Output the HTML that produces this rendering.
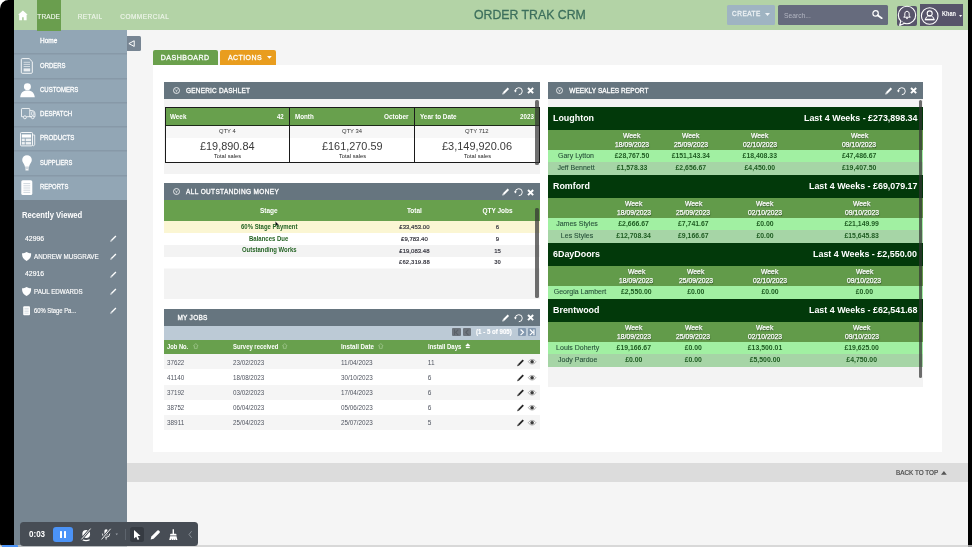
<!DOCTYPE html>
<html lang="en">
<head>
<meta charset="utf-8">
<title>ORDER TRAK CRM</title>
<style>
*{box-sizing:border-box;margin:0;padding:0}
html,body{width:972px;height:547px;overflow:hidden;background:#fff}
body{position:relative;font-family:"Liberation Sans",sans-serif;color:#fff}
.b{position:absolute}
.t{position:absolute;white-space:nowrap;line-height:1;display:block;transform-origin:0 50%}
svg{position:absolute;overflow:visible}
.sep{position:absolute;left:14px;width:112.7px;height:1px;background:#8799a8;box-shadow:0 1px 0 #8d9fae}
.dh{position:absolute;height:17px;background:#66757f}
.db{position:absolute;background:#f3f3f3}
.gh{position:absolute;background:#68a04d}
.wt{position:absolute;left:547.6px;width:375.2px;background:#02390a}
.ww{position:absolute;left:547.6px;width:375.2px;height:20px;background:#629b4a}
.w1{position:absolute;left:547.6px;width:375.2px;height:12px;background:#a1f0a2}
.w2{position:absolute;left:547.6px;width:375.2px;height:12px;background:#a6d5a6}
.sb{position:absolute;width:3.3px;border-radius:1.6px;background:rgba(50,50,50,.7)}
</style>
</head>
<body>
<!-- frame -->
<div class="b" style="left:14px;top:29.5px;width:954px;height:517.5px;background:#f5f5f5"></div>
<div class="b" style="left:0;top:0;width:14.3px;height:547px;background:#000;border-radius:8.500px 0 0 4px"></div>
<div class="b" style="left:967.6px;top:0;width:4.4px;height:547px;background:#000"></div>

<!-- top bar -->
<div class="b" style="left:14px;top:0;width:953.8px;height:29.5px;background:#b3d3a6"></div>
<div class="b" style="left:36.7px;top:0;width:24.2px;height:31px;background:#6a9e4e;z-index:2"></div>
<svg style="left:17.800px;top:10px" width="9.800" height="10.600" viewBox="0 0 10 10.4"><path d="M5 0.200L0.100 4.700H1.200V10.200H4.100V7.300H5.900V10.200H8.800V4.700H9.900Z" fill="#fff"/></svg>
<div class="b" style="left:727px;top:5px;width:48.2px;height:19.500px;background:#9fb4c2;border-radius:1.5px"></div>
<svg style="left:765.4px;top:12.8px" width="5" height="3" viewBox="0 0 5 3"><path d="M0 0H5L2.5 3Z" fill="#edf2f5"/></svg>
<div class="b" style="left:778px;top:5px;width:110px;height:19.500px;background:#666b7d;border-radius:1.5px"></div>
<svg style="left:871.5px;top:10px" width="10.6" height="9" viewBox="0 0 10.6 9"><circle cx="3.6" cy="3.4" r="2.7" fill="none" stroke="#fff" stroke-width="1.2"/><path d="M5.6 5.2L9.8 8.2" stroke="#fff" stroke-width="1.7" stroke-linecap="round"/></svg>
<!-- bell -->
<div class="b" style="left:897.2px;top:6.2px;width:19.5px;height:19.4px;background:#57546a;border-radius:2px"></div>
<svg style="left:897px;top:5px" width="20" height="22" viewBox="0 0 20 22"><circle cx="10" cy="10" r="8.700" fill="none" stroke="#fff" stroke-width="1.100"/><path d="M3.800 16L2.700 20.400L7.600 18.300" fill="#57546a" stroke="#fff" stroke-width="1.100" stroke-linejoin="round"/><path d="M10 6.300c-1.500 0-2.200 1.200-2.200 2.600v2l-1.100 1.300h6.600l-1.100-1.300v-2c0-1.400-.7-2.600-2.200-2.600z" fill="none" stroke="#fff" stroke-width="1" stroke-linejoin="round"/><path d="M9.200 12.600h1.600v.9a.8.800 0 0 1-1.600 0z" fill="#fff"/></svg>
<!-- user -->
<div class="b" style="left:920.2px;top:4px;width:42.600px;height:21.700px;background:#57546a"></div>
<svg style="left:920.2px;top:4px" width="20" height="22" viewBox="0 0 20 22"><circle cx="9.700" cy="12" r="8.300" fill="none" stroke="#fff" stroke-width="1.100"/><circle cx="9.700" cy="9.400" r="2.500" fill="none" stroke="#fff" stroke-width="1.100"/><path d="M5.400 15.600c.5-2.300 1.600-3.400 2.700-3.700h3.200c1.100.3 2.200 1.400 2.700 3.700z" fill="none" stroke="#fff" stroke-width="1"/><rect x="4.800" y="14.800" width="9.800" height="1.500" fill="#fff"/></svg>
<svg style="left:959.3px;top:14.600px" width="3.2" height="2" viewBox="0 0 3.2 2"><path d="M0 0H3.2L1.600 2Z" fill="#fff"/></svg>

<!-- sidebar -->
<div class="b" style="left:14px;top:29.5px;width:112.7px;height:171px;background:#92a6b5"></div>
<div class="b" style="left:14px;top:200px;width:112.7px;height:347px;background:#768591"></div>
<div class="sep" style="top:53px"></div><div class="sep" style="top:78px"></div><div class="sep" style="top:102px"></div><div class="sep" style="top:126px"></div><div class="sep" style="top:150px"></div><div class="sep" style="top:175px"></div>
<!-- toggle -->
<div class="b" style="left:126.7px;top:35.8px;width:14.3px;height:14.8px;background:#778593;border-radius:0 1.5px 1.5px 0"></div>
<svg style="left:128.300px;top:40.300px" width="7" height="7.200" viewBox="0 0 6.4 6.600"><path d="M5.700 0.700V5.900L0.800 3.300Z" fill="none" stroke="#fff" stroke-width="0.9" stroke-linejoin="round"/></svg>
<!-- sidebar icons -->
<svg style="left:21px;top:58px" width="12" height="16" viewBox="0 0 12 16"><path d="M1.300 0.600H8.200L11.300 3.700V14.300a1 1 0 0 1-1 1H1.300a1 1 0 0 1-1-1V1.600a1 1 0 0 1 1-1z" fill="none" stroke="#fff" stroke-width="0.9"/><path d="M2.600 4.300H9M2.600 6.400H9M2.600 8.500H9" stroke="#fff" stroke-width="0.700" opacity=".85"/><rect x="2.600" y="10.400" width="6.600" height="3" fill="#fff" opacity=".8"/></svg>
<svg style="left:19.8px;top:83px" width="15" height="14.2" viewBox="0 0 15 14.200"><circle cx="7.400" cy="3.700" r="3.500" fill="#fff"/><path d="M0.200 14.200C0.600 10.200 2.600 7.600 7.400 7.600S14.200 10.200 14.800 14.200Z" fill="#fff"/></svg>
<svg style="left:21px;top:107.800px" width="14.600" height="11.400" viewBox="0 0 14.600 11.400"><path d="M0.500 8.700V1.200a.7.700 0 0 1 .7-.7H8.100a.7.700 0 0 1 .7.700V8.700" fill="none" stroke="#fff" stroke-width="0.800"/><path d="M8.800 2.600H11.700c1.300 0 2.300 1.600 2.300 3.400V8.700H8.800" fill="none" stroke="#fff" stroke-width="0.800"/><rect x="10.600" y="3.800" width="2.300" height="3.400" rx=".6" fill="none" stroke="#fff" stroke-width="0.700"/><circle cx="3.900" cy="9.300" r="1.500" fill="#92a6b5" stroke="#fff" stroke-width="0.800"/><circle cx="11.700" cy="9.300" r="1.400" fill="#92a6b5" stroke="#fff" stroke-width="0.800"/><path d="M0.500 8.700H2.400M5.400 8.700H10.200" stroke="#fff" stroke-width="0.800"/></svg>
<svg style="left:19.800px;top:131.800px" width="15.200" height="14.400" viewBox="0 0 15.200 14.400"><rect x="0.500" y="0.500" width="12" height="13.400" rx="1" fill="none" stroke="#fff" stroke-width="0.900"/><path d="M12.500 3H14.700V12.400a1.300 1.300 0 0 1-2.200 1" fill="none" stroke="#fff" stroke-width="0.800"/><rect x="1.800" y="2.400" width="9.300" height="3.200" fill="#fff"/><rect x="1.800" y="6.600" width="3" height="2.600" fill="#fff" opacity=".85"/><rect x="5.700" y="6.600" width="5.400" height="2.600" fill="#fff" opacity=".85"/><rect x="1.800" y="10.100" width="3" height="2.400" fill="#fff" opacity=".85"/><rect x="5.700" y="10.100" width="5.400" height="2.400" fill="#fff" opacity=".85"/></svg>
<svg style="left:22.200px;top:155px" width="10" height="16.200" viewBox="0 0 10 16.200"><path d="M5 0.200a4.800 4.800 0 0 0-4.800 4.800c0 2.300 1.700 3.400 2.300 5.200l.4 1.600h4.200l.4-1.600c.6-1.800 2.300-2.900 2.300-5.200A4.800 4.800 0 0 0 5 0.200z" fill="#fff"/><rect x="3.100" y="12.400" width="3.800" height="1.200" fill="#fff" opacity=".9"/><rect x="3.400" y="14.100" width="3.200" height="1.300" rx=".5" fill="#fff" opacity=".9"/></svg>
<svg style="left:21.400px;top:179.800px" width="11.600" height="15.400" viewBox="0 0 11.600 15.400"><rect x="0.300" y="0.300" width="11" height="14.800" rx="1.500" fill="#fff"/><path d="M2.400 3.600H9.200M2.400 5.800H9.200M2.400 8H9.200M2.400 10.200H9.200M2.400 12.400H9.200" stroke="#c9d2da" stroke-width="0.900"/></svg>
<!-- recents icons -->
<svg style="left:21.500px;top:252px" width="9.200" height="9" viewBox="0 0 9.200 9"><path d="M4.600 0.100C3.200 1 1.700 1.300 0.100 1.300c-.2 3.400.9 6.100 4.500 7.600 3.600-1.500 4.700-4.200 4.500-7.600-1.600 0-3.100-.3-4.500-1.200z" fill="#fff"/></svg>
<svg style="left:21.500px;top:287.300px" width="9.200" height="9" viewBox="0 0 9.200 9"><path d="M4.600 0.100C3.200 1 1.700 1.300 0.100 1.300c-.2 3.400.9 6.100 4.500 7.600 3.600-1.500 4.700-4.200 4.500-7.600-1.600 0-3.100-.3-4.500-1.200z" fill="#fff"/></svg>
<svg style="left:22.600px;top:305.700px" width="7.200" height="9.400" viewBox="0 0 7.200 9.400"><rect x="0.200" y="0.200" width="6.800" height="9" rx="1" fill="#fff"/><path d="M1.500 2.400H5.700M1.500 4H5.700M1.500 5.600H5.700M1.500 7.200H5.700" stroke="#c3ccd3" stroke-width="0.600"/></svg>
<svg style="left:110.400px;top:235px" width="7" height="7" viewBox="0 0 7 7"><path d="M1.400 5.600L5.900 1.100" stroke="#fff" stroke-width="1.350" fill="none"/><path d="M0.300 6.700L0.800 5.050L1.950 6.200Z" fill="#fff"/></svg>
<svg style="left:110.400px;top:253px" width="7" height="7" viewBox="0 0 7 7"><path d="M1.400 5.600L5.900 1.100" stroke="#fff" stroke-width="1.350" fill="none"/><path d="M0.300 6.700L0.800 5.050L1.950 6.200Z" fill="#fff"/></svg>
<svg style="left:110.400px;top:270.500px" width="7" height="7" viewBox="0 0 7 7"><path d="M1.400 5.600L5.900 1.100" stroke="#fff" stroke-width="1.350" fill="none"/><path d="M0.300 6.700L0.800 5.050L1.950 6.200Z" fill="#fff"/></svg>
<svg style="left:110.400px;top:288.300px" width="7" height="7" viewBox="0 0 7 7"><path d="M1.400 5.600L5.900 1.100" stroke="#fff" stroke-width="1.350" fill="none"/><path d="M0.300 6.700L0.800 5.050L1.950 6.200Z" fill="#fff"/></svg>
<svg style="left:110.400px;top:307px" width="7" height="7" viewBox="0 0 7 7"><path d="M1.400 5.600L5.900 1.100" stroke="#fff" stroke-width="1.350" fill="none"/><path d="M0.300 6.700L0.800 5.050L1.950 6.200Z" fill="#fff"/></svg>

<!-- tabs + panel -->
<div class="b" style="left:153px;top:49.900px;width:64.900px;height:15.500px;background:#6aa04c;border-radius:2px 2px 0 0"></div>
<div class="b" style="left:219.900px;top:49.900px;width:55.900px;height:15.300px;background:#e99d1e;border-radius:2px 2px 0 0"></div>
<svg style="left:267px;top:56.400px" width="4.800" height="2.800" viewBox="0 0 4.800 2.800"><path d="M0 0H4.800L2.400 2.800Z" fill="#fff"/></svg>
<div class="b" style="left:153px;top:65.200px;width:788.600px;height:387.200px;background:#fff"></div>
<div class="b" style="left:126.700px;top:463px;width:841px;height:19px;background:#dcdcdc"></div>
<svg style="left:941px;top:471px" width="5.800" height="3.800" viewBox="0 0 5.800 3.800"><path d="M0 3.800H5.800L2.900 0Z" fill="#555"/></svg>

<!-- dashlet 1: generic -->
<div class="db" style="left:164.200px;top:98px;width:375.500px;height:75.700px"></div>
<div class="dh" style="left:164.200px;top:81.800px;width:375.500px"></div>
<div class="b" style="left:165px;top:107px;width:375px;height:56px;background:#fff;border:1px solid #1a1a1a"></div>
<div class="b" style="left:166px;top:126px;width:373px;height:12px;background:#f7f7f7"></div>
<div class="gh" style="left:166px;top:108px;width:373px;height:17px"></div>
<div class="b" style="left:166px;top:125px;width:373px;height:1px;background:#1d2b18"></div>
<div class="b" style="left:289px;top:107px;width:1px;height:56px;background:#1a1a1a"></div>
<div class="b" style="left:414px;top:107px;width:1px;height:56px;background:#1a1a1a"></div>
<div class="sb" style="left:535.300px;top:100px;height:65px;width:3.400px"></div>

<!-- dashlet 2: outstanding -->
<div class="db" style="left:164.200px;top:200px;width:375.500px;height:99px"></div>
<div class="dh" style="left:164.200px;top:183.200px;width:375.500px"></div>
<div class="gh" style="left:164.200px;top:200px;width:375.500px;height:21px"></div>
<div class="b" style="left:164.200px;top:221px;width:375.500px;height:12px;background:#fbf6d3"></div>
<div class="b" style="left:164.200px;top:233px;width:375.500px;height:12px;background:#fff"></div>
<div class="b" style="left:164.200px;top:245px;width:375.500px;height:12px;background:#f3f3f3"></div>
<div class="b" style="left:164.200px;top:257px;width:375.500px;height:11px;background:#fff"></div>
<div class="b" style="left:164.200px;top:268px;width:375.500px;height:1px;background:#f9f9f9"></div>
<div class="sb" style="left:535.300px;top:208.300px;height:89.500px;width:3.400px"></div>
<svg style="left:275.300px;top:220.900px" width="4.600" height="6.600" viewBox="0 0 4.600 6.600"><path d="M0.300 0.200V5.300L1.500 4.300L2.400 6.200L3.300 5.800L2.400 3.900H4.100Z" fill="#0a0a0a" stroke="#fff" stroke-width="0.350" stroke-linejoin="round"/></svg>

<!-- dashlet 3: my jobs -->
<div class="dh" style="left:164.200px;top:308.900px;width:375.500px;height:16.800px"></div>
<div class="b" style="left:164.200px;top:325.600px;width:375.500px;height:14.700px;background:#bccad6"></div>
<div class="gh" style="left:164.200px;top:340.200px;width:375.500px;height:14.200px"></div>
<div class="b" style="left:164.200px;top:354.400px;width:375.500px;height:15.100px;background:#f5f5f5"></div>
<div class="b" style="left:164.200px;top:384.600px;width:375.500px;height:15.100px;background:#f5f5f5"></div>
<div class="b" style="left:164.200px;top:414.800px;width:375.500px;height:15.100px;background:#f5f5f5"></div>
<!-- pagination -->
<div class="b" style="left:452px;top:327.700px;width:8.600px;height:8.700px;background:#6d747c;border-radius:1px"></div>
<div class="b" style="left:462.700px;top:327.700px;width:8.600px;height:8.700px;background:#6d747c;border-radius:1px"></div>
<div class="b" style="left:517.700px;top:327.700px;width:8.800px;height:8.700px;background:#8499af;border-radius:1px"></div>
<div class="b" style="left:527.800px;top:327.700px;width:8.600px;height:8.700px;background:#8499af;border-radius:1px"></div>
<svg style="left:452px;top:327.700px" width="84.400" height="8.700" viewBox="0 0 84.400 8.700"><g fill="none" stroke-width="1.100"><path d="M6.200 1.600L3.600 4.350L6.200 7.100M2.500 1.600V7.100" stroke="#5a6067"/><path d="M16.400 1.600L13.800 4.350L16.400 7.100" stroke="#5a6067"/><path d="M68.600 1.500L71.500 4.350L68.600 7.200" stroke="#fff" stroke-width="1.200"/><path d="M77.900 1.500L80.800 4.350L77.900 7.200M82 1.500V7.200" stroke="#fff" stroke-width="1.200"/></g></svg>

<!-- dashlet 4: weekly -->
<div class="db" style="left:547.600px;top:98px;width:375.200px;height:288.500px"></div>
<div class="dh" style="left:547.600px;top:81.800px;width:375.200px"></div>
<div class="wt" style="top:107px;height:23px"></div>
<div class="ww" style="top:130px;height:20px"></div>
<div class="w1" style="top:150px;height:12px"></div>
<div class="w2" style="top:162px;height:13px"></div>
<div class="wt" style="top:175px;height:23px"></div>
<div class="ww" style="top:198px;height:20px"></div>
<div class="w1" style="top:218px;height:12px"></div>
<div class="w2" style="top:230px;height:13px"></div>
<div class="wt" style="top:243px;height:23px"></div>
<div class="ww" style="top:266px;height:20px"></div>
<div class="w1" style="top:286px;height:13px"></div>
<div class="wt" style="top:299px;height:23px"></div>
<div class="ww" style="top:322px;height:20px"></div>
<div class="w1" style="top:342px;height:12px"></div>
<div class="w2" style="top:354px;height:13px"></div>
<div class="sb" style="left:918.600px;top:100px;height:277.600px;width:3.400px"></div>

<svg style="left:172.9px;top:86.8px" width="7" height="7" viewBox="0 0 7 7"><circle cx="3.500" cy="3.500" r="3" fill="none" stroke="#fff" stroke-width="0.800"/><path d="M1.900 2.700L3.500 3.600L5.100 2.700M3.500 3.600V5.300" fill="none" stroke="#fff" stroke-width="0.600" opacity=".9"/></svg>
<svg style="left:172.7px;top:187.8px" width="7" height="7" viewBox="0 0 7 7"><circle cx="3.500" cy="3.500" r="3" fill="none" stroke="#fff" stroke-width="0.800"/><path d="M1.900 2.700L3.500 3.600L5.100 2.700M3.500 3.600V5.300" fill="none" stroke="#fff" stroke-width="0.600" opacity=".9"/></svg>
<svg style="left:556.0px;top:86.7px" width="7" height="7" viewBox="0 0 7 7"><circle cx="3.500" cy="3.500" r="3" fill="none" stroke="#fff" stroke-width="0.800"/><path d="M1.900 2.700L3.500 3.600L5.100 2.700M3.500 3.600V5.300" fill="none" stroke="#fff" stroke-width="0.600" opacity=".9"/></svg>
<svg style="left:501.8px;top:86.9px" width="7.700" height="7.700" viewBox="0 0 7 7"><path d="M1.500 5.500L5.800 1.200" stroke="#fff" stroke-width="1.800" fill="none"/><path d="M0.200 6.800L0.700 4.900L2.100 6.300Z" fill="#fff"/></svg><svg style="left:513.9px;top:87.0px" width="9" height="8.400" viewBox="0 0 9 8.400"><path d="M1.300 4.400A3.500 3.500 0 1 1 4.800 7.700" fill="none" stroke="#fff" stroke-width="0.950"/><path d="M0 3.300L1.300 5.600L2.900 3.500Z" fill="#fff"/></svg><svg style="left:527.0px;top:87.2px" width="7.200" height="7.200" viewBox="0 0 6.400 6.400"><path d="M0.900 0.900L5.500 5.500M5.500 0.900L0.900 5.500" stroke="#fff" stroke-width="1.750"/></svg>
<svg style="left:501.8px;top:188.3px" width="7.700" height="7.700" viewBox="0 0 7 7"><path d="M1.500 5.500L5.800 1.200" stroke="#fff" stroke-width="1.800" fill="none"/><path d="M0.200 6.800L0.700 4.900L2.100 6.300Z" fill="#fff"/></svg><svg style="left:513.9px;top:188.4px" width="9" height="8.400" viewBox="0 0 9 8.400"><path d="M1.300 4.400A3.500 3.500 0 1 1 4.800 7.700" fill="none" stroke="#fff" stroke-width="0.950"/><path d="M0 3.300L1.300 5.600L2.900 3.500Z" fill="#fff"/></svg><svg style="left:527.0px;top:188.6px" width="7.200" height="7.200" viewBox="0 0 6.400 6.400"><path d="M0.900 0.900L5.500 5.500M5.500 0.900L0.900 5.500" stroke="#fff" stroke-width="1.750"/></svg>
<svg style="left:501.8px;top:313.9px" width="7.700" height="7.700" viewBox="0 0 7 7"><path d="M1.500 5.500L5.800 1.200" stroke="#fff" stroke-width="1.800" fill="none"/><path d="M0.200 6.800L0.700 4.900L2.100 6.300Z" fill="#fff"/></svg><svg style="left:513.9px;top:314.0px" width="9" height="8.400" viewBox="0 0 9 8.400"><path d="M1.300 4.400A3.500 3.500 0 1 1 4.800 7.700" fill="none" stroke="#fff" stroke-width="0.950"/><path d="M0 3.300L1.300 5.600L2.900 3.500Z" fill="#fff"/></svg><svg style="left:527.0px;top:314.2px" width="7.200" height="7.200" viewBox="0 0 6.400 6.400"><path d="M0.900 0.900L5.500 5.500M5.500 0.900L0.900 5.500" stroke="#fff" stroke-width="1.750"/></svg>
<svg style="left:884.9px;top:86.9px" width="7.700" height="7.700" viewBox="0 0 7 7"><path d="M1.500 5.500L5.800 1.200" stroke="#fff" stroke-width="1.800" fill="none"/><path d="M0.200 6.800L0.700 4.900L2.100 6.300Z" fill="#fff"/></svg><svg style="left:897.0px;top:87.0px" width="9" height="8.400" viewBox="0 0 9 8.400"><path d="M1.300 4.400A3.500 3.500 0 1 1 4.800 7.700" fill="none" stroke="#fff" stroke-width="0.950"/><path d="M0 3.300L1.300 5.600L2.900 3.500Z" fill="#fff"/></svg><svg style="left:910.1px;top:87.2px" width="7.200" height="7.200" viewBox="0 0 6.400 6.400"><path d="M0.900 0.900L5.500 5.500M5.500 0.900L0.900 5.500" stroke="#fff" stroke-width="1.750"/></svg>
<svg style="left:192.5px;top:343.4px;opacity:.5" width="5.600" height="6" viewBox="0 0 5.600 6"><path d="M2.800 0.500L5.100 2.900H4.200V5.400H1.400V2.900H0.500Z" fill="none" stroke="#e2f3da" stroke-width="0.700" stroke-linejoin="round"/></svg>
<svg style="left:282.2px;top:343.4px;opacity:.5" width="5.600" height="6" viewBox="0 0 5.600 6"><path d="M2.800 0.500L5.100 2.900H4.200V5.400H1.400V2.900H0.500Z" fill="none" stroke="#e2f3da" stroke-width="0.700" stroke-linejoin="round"/></svg>
<svg style="left:378.4px;top:343.4px;opacity:.5" width="5.600" height="6" viewBox="0 0 5.600 6"><path d="M2.800 0.500L5.100 2.900H4.200V5.400H1.400V2.900H0.500Z" fill="none" stroke="#e2f3da" stroke-width="0.700" stroke-linejoin="round"/></svg>
<svg style="left:465.2px;top:343.4px" width="5.600" height="6" viewBox="0 0 5.600 6"><path d="M2.800 0.200L5.400 3H0.200Z" fill="#fff"/><rect x="0.900" y="3.700" width="3.800" height="1.400" fill="#fff"/></svg>
<svg style="left:516.800px;top:358.5px" width="7.400" height="7.400" viewBox="0 0 7 7"><path d="M1.500 5.500L5.900 1.100" stroke="#262626" stroke-width="1.700" fill="none"/><path d="M0.200 6.800L0.700 5L2 6.300Z" fill="#262626"/></svg><svg style="left:528px;top:359.4px" width="8.200" height="5.400" viewBox="0 0 8.200 5.400"><path d="M0.300 2.700C1.500 1 2.700 0.400 4.100 0.400S6.700 1 7.900 2.700C6.700 4.400 5.500 5 4.100 5S1.500 4.400 0.300 2.700Z" fill="#fff" stroke="#777" stroke-width="0.600"/><circle cx="4.100" cy="2.700" r="1.800" fill="#3a3a3a"/></svg>
<svg style="left:516.800px;top:373.6px" width="7.400" height="7.400" viewBox="0 0 7 7"><path d="M1.500 5.500L5.900 1.100" stroke="#262626" stroke-width="1.700" fill="none"/><path d="M0.200 6.800L0.700 5L2 6.300Z" fill="#262626"/></svg><svg style="left:528px;top:374.5px" width="8.200" height="5.400" viewBox="0 0 8.200 5.400"><path d="M0.300 2.700C1.500 1 2.700 0.400 4.100 0.400S6.700 1 7.900 2.700C6.700 4.400 5.500 5 4.100 5S1.500 4.400 0.300 2.700Z" fill="#fff" stroke="#777" stroke-width="0.600"/><circle cx="4.100" cy="2.700" r="1.800" fill="#3a3a3a"/></svg>
<svg style="left:516.800px;top:388.7px" width="7.400" height="7.400" viewBox="0 0 7 7"><path d="M1.500 5.500L5.900 1.100" stroke="#262626" stroke-width="1.700" fill="none"/><path d="M0.200 6.800L0.700 5L2 6.300Z" fill="#262626"/></svg><svg style="left:528px;top:389.6px" width="8.200" height="5.400" viewBox="0 0 8.200 5.400"><path d="M0.300 2.700C1.500 1 2.700 0.400 4.100 0.400S6.700 1 7.900 2.700C6.700 4.400 5.500 5 4.100 5S1.500 4.400 0.300 2.700Z" fill="#fff" stroke="#777" stroke-width="0.600"/><circle cx="4.100" cy="2.700" r="1.800" fill="#3a3a3a"/></svg>
<svg style="left:516.800px;top:403.8px" width="7.400" height="7.400" viewBox="0 0 7 7"><path d="M1.500 5.500L5.900 1.100" stroke="#262626" stroke-width="1.700" fill="none"/><path d="M0.200 6.800L0.700 5L2 6.300Z" fill="#262626"/></svg><svg style="left:528px;top:404.7px" width="8.200" height="5.400" viewBox="0 0 8.200 5.400"><path d="M0.300 2.700C1.500 1 2.700 0.400 4.100 0.400S6.700 1 7.900 2.700C6.700 4.400 5.500 5 4.100 5S1.500 4.400 0.300 2.700Z" fill="#fff" stroke="#777" stroke-width="0.600"/><circle cx="4.100" cy="2.700" r="1.800" fill="#3a3a3a"/></svg>
<svg style="left:516.800px;top:418.9px" width="7.400" height="7.400" viewBox="0 0 7 7"><path d="M1.500 5.500L5.900 1.100" stroke="#262626" stroke-width="1.700" fill="none"/><path d="M0.200 6.800L0.700 5L2 6.300Z" fill="#262626"/></svg><svg style="left:528px;top:419.8px" width="8.200" height="5.400" viewBox="0 0 8.200 5.400"><path d="M0.300 2.700C1.500 1 2.700 0.400 4.100 0.400S6.700 1 7.900 2.700C6.700 4.400 5.500 5 4.100 5S1.500 4.400 0.300 2.700Z" fill="#fff" stroke="#777" stroke-width="0.600"/><circle cx="4.100" cy="2.700" r="1.800" fill="#3a3a3a"/></svg>

<!-- bottom strip + toolbar -->
<div class="b" style="left:0;top:545.200px;width:972px;height:1.800px;background:rgba(205,205,205,.75)"></div>
<div class="b" style="left:2px;top:545.200px;width:16px;height:1.800px;background:#4b93f7;border-radius:1px 1px 0 0"></div>
<div class="b" style="left:19.900px;top:521.900px;width:178px;height:23.700px;background:#474d55;border-radius:3.500px"></div>
<div class="b" style="left:53.200px;top:527px;width:19.600px;height:14.900px;background:#4b93f7;border-radius:3px"></div>
<div class="b" style="left:59.800px;top:530.800px;width:2.200px;height:7.200px;background:#fff;border-radius:.5px"></div>
<div class="b" style="left:64.100px;top:530.800px;width:2.200px;height:7.200px;background:#fff;border-radius:.5px"></div>
<div class="b" style="left:125.300px;top:528.500px;width:0.700px;height:11.500px;background:#5d646d"></div>
<div class="b" style="left:130px;top:527px;width:14.200px;height:14.900px;background:#363b42;border-radius:2.500px"></div>
<svg style="left:80px;top:527px" width="118" height="15" viewBox="0 0 118 15">
<g fill="#fff" stroke="none">
<!-- camera off -->
<circle cx="6.200" cy="7" r="3.900"/><path d="M2.800 12.300c2 .9 4.600.9 6.600-.1l.5 1.100c-2.400 1.200-5.300 1.200-7.700 0z"/><path d="M1.200 12.600L10.800 1.400" stroke="#474d55" stroke-width="2.400"/><path d="M1.400 12.400L10.600 1.600" stroke="#fff" stroke-width="0.900"/>
<!-- mic off -->
<rect x="24.400" y="2.200" width="3.400" height="6.600" rx="1.700"/><path d="M22.400 6.600a3.700 3.700 0 0 0 7.400 0" fill="none" stroke="#fff" stroke-width="0.900"/><path d="M26.100 10.300V12.600" stroke="#fff" stroke-width="0.900"/><path d="M21.400 12.600L30.800 1.600" stroke="#474d55" stroke-width="2.400"/><path d="M21.600 12.400L30.600 1.800" stroke="#fff" stroke-width="0.900"/>
<path d="M35.500 6.600H38L36.750 8.200Z" fill="#9aa0a8"/>
<!-- cursor -->
<path d="M54 3V11.600L56.200 9.700L57.700 13L59.200 12.300L57.700 9.100H60.600Z"/>
<!-- pencil -->
<path d="M70.600 12.600L71.400 9.500L77.400 3.500a1.100 1.100 0 0 1 1.500 0l.7.700a1.100 1.100 0 0 1 0 1.500L73.600 11.700Z"/>
<!-- broom -->
<path d="M92.600 2.200h1.400V6.800h1.600c.6 0 .9.400.9.900V8.600H90.100V7.700c0-.5.300-.9.900-.9h1.600z"/><path d="M90.100 9.200H96.500L97.400 13H95.800L95.400 11.300L95.200 13H93.900L93.700 11.300L93.400 13H92L91.800 11.300L91.200 13H89.200Z"/>
</g>
<path d="M111.600 4.200L109 7.500L111.600 10.800" fill="none" stroke="#8d939b" stroke-width="0.900"/>
</svg>

<div id="tx" style="position:absolute;left:0;top:0;width:972px;height:547px;will-change:transform;z-index:5">
<span class="t" style="left:37.30px;top:13.71px;font-size:6.5px;color:#eef5ea;letter-spacing:0.117px;-webkit-text-stroke-width:0.15px;">TRADE</span>
<span class="t" style="left:77.80px;top:13.71px;font-size:6.5px;color:#eef5ea;letter-spacing:0.384px;-webkit-text-stroke-width:0.15px;">RETAIL</span>
<span class="t" style="left:120.20px;top:13.71px;font-size:6.5px;color:#eef5ea;letter-spacing:0.504px;-webkit-text-stroke-width:0.15px;">COMMERCIAL</span>
<span class="t" style="left:474.00px;top:8.33px;font-size:13px;color:#3c6f5c;transform:scaleX(0.9457);-webkit-text-stroke:0.3px #3c6f5c;">ORDER TRAK CRM</span>
<span class="t" style="left:732.00px;top:10.81px;font-size:6.5px;color:#edf2f5;letter-spacing:0.502px;-webkit-text-stroke-width:0.28px;">CREATE</span>
<span class="t" style="left:783.90px;top:11.58px;font-size:7.6px;color:#b3b6c2;transform:scaleX(0.8819);">Search...</span>
<span class="t" style="left:942.00px;top:11.01px;font-size:6.5px;font-weight:700;transform:scaleX(0.8615);">Khan</span>
<span class="t" style="left:39.70px;top:37.37px;font-size:7px;transform:scaleX(0.9258);-webkit-text-stroke-width:0.28px;">Home</span>
<span class="t" style="left:39.70px;top:61.57px;font-size:7.4px;transform:scaleX(0.8063);-webkit-text-stroke-width:0.28px;">ORDERS</span>
<span class="t" style="left:39.70px;top:85.97px;font-size:7.4px;transform:scaleX(0.8133);-webkit-text-stroke-width:0.28px;">CUSTOMERS</span>
<span class="t" style="left:39.70px;top:110.17px;font-size:7.4px;transform:scaleX(0.8223);-webkit-text-stroke-width:0.28px;">DESPATCH</span>
<span class="t" style="left:39.70px;top:134.37px;font-size:7.4px;transform:scaleX(0.8292);-webkit-text-stroke-width:0.28px;">PRODUCTS</span>
<span class="t" style="left:39.70px;top:158.77px;font-size:7.4px;transform:scaleX(0.7807);-webkit-text-stroke-width:0.28px;">SUPPLIERS</span>
<span class="t" style="left:39.70px;top:183.17px;font-size:7.4px;transform:scaleX(0.7951);-webkit-text-stroke-width:0.28px;">REPORTS</span>
<span class="t" style="left:21.50px;top:210.59px;font-size:9px;font-weight:700;transform:scaleX(0.8508);">Recently Viewed</span>
<span class="t" style="left:24.50px;top:234.97px;font-size:7px;transform:scaleX(0.9811);-webkit-text-stroke-width:0.15px;">42996</span>
<span class="t" style="left:33.80px;top:253.07px;font-size:7px;transform:scaleX(0.8911);-webkit-text-stroke-width:0.15px;">ANDREW MUSGRAVE</span>
<span class="t" style="left:24.50px;top:270.47px;font-size:7px;transform:scaleX(0.9811);-webkit-text-stroke-width:0.15px;">42916</span>
<span class="t" style="left:33.80px;top:288.37px;font-size:7px;transform:scaleX(0.8839);-webkit-text-stroke-width:0.15px;">PAUL EDWARDS</span>
<span class="t" style="left:33.80px;top:307.07px;font-size:7px;transform:scaleX(0.8341);-webkit-text-stroke-width:0.15px;">60% Stage Pa...</span>
<span class="t" style="left:160.80px;top:54.17px;font-size:7px;letter-spacing:0.495px;-webkit-text-stroke-width:0.28px;">DASHBOARD</span>
<span class="t" style="left:227.90px;top:54.17px;font-size:7px;letter-spacing:0.429px;-webkit-text-stroke-width:0.28px;">ACTIONS</span>
<span class="t" style="left:186.00px;top:87.61px;font-size:6.5px;letter-spacing:0.185px;-webkit-text-stroke-width:0.28px;">GENERIC DASHLET</span>
<span class="t" style="left:186.10px;top:188.81px;font-size:6.5px;letter-spacing:0.355px;-webkit-text-stroke-width:0.28px;">ALL OUTSTANDING MONEY</span>
<span class="t" style="left:177.40px;top:314.81px;font-size:6.5px;letter-spacing:0.263px;-webkit-text-stroke-width:0.28px;">MY JOBS</span>
<span class="t" style="left:569.20px;top:87.61px;font-size:6.5px;letter-spacing:0.065px;-webkit-text-stroke-width:0.28px;">WEEKLY SALES REPORT</span>
<span class="t" style="left:170.30px;top:114.02px;font-size:6.5px;font-weight:700;transform:scaleX(0.9719);">Week</span>
<span class="t" style="left:277.30px;top:114.02px;font-size:6.5px;font-weight:700;transform:scaleX(0.9261);">42</span>
<span class="t" style="left:295.20px;top:114.02px;font-size:6.5px;font-weight:700;transform:scaleX(0.9590);">Month</span>
<span class="t" style="left:384.40px;top:114.02px;font-size:6.5px;font-weight:700;transform:scaleX(0.9871);">October</span>
<span class="t" style="left:420.40px;top:114.02px;font-size:6.5px;font-weight:700;transform:scaleX(0.9740);">Year to Date</span>
<span class="t" style="left:519.80px;top:114.02px;font-size:6.5px;font-weight:700;transform:scaleX(0.9607);">2023</span>
<span class="t" style="left:218.75px;top:128.26px;font-size:6px;color:#333;transform:scaleX(0.9690);">QTY 4</span>
<span class="t" style="left:199.85px;top:140.67px;font-size:11.5px;color:#3a3a3a;transform:scaleX(0.9468);">£19,890.84</span>
<span class="t" style="left:213.60px;top:153.86px;font-size:5.8px;color:#222;transform:scaleX(0.9857);">Total sales</span>
<span class="t" style="left:342.10px;top:128.26px;font-size:6px;color:#333;transform:scaleX(0.9719);">QTY 34</span>
<span class="t" style="left:321.85px;top:140.67px;font-size:11.5px;color:#3a3a3a;transform:scaleX(0.9460);">£161,270.59</span>
<span class="t" style="left:338.60px;top:153.86px;font-size:5.8px;color:#222;transform:scaleX(0.9857);">Total sales</span>
<span class="t" style="left:465.35px;top:128.26px;font-size:6px;color:#333;transform:scaleX(0.9830);">QTY 712</span>
<span class="t" style="left:442.10px;top:140.67px;font-size:11.5px;color:#3a3a3a;transform:scaleX(0.9518);">£3,149,920.06</span>
<span class="t" style="left:463.60px;top:153.86px;font-size:5.8px;color:#222;transform:scaleX(0.9857);">Total sales</span>
<span class="t" style="left:259.95px;top:207.72px;font-size:6.5px;font-weight:700;">Stage</span>
<span class="t" style="left:406.88px;top:207.72px;font-size:6.5px;font-weight:700;">Total</span>
<span class="t" style="left:482.38px;top:207.72px;font-size:6.5px;font-weight:700;">QTY Jobs</span>
<span class="t" style="left:240.55px;top:223.51px;font-size:6.3px;font-weight:700;color:#256425;transform:scaleX(0.9496);">60% Stage Payment</span>
<span class="t" style="left:249.15px;top:235.61px;font-size:6.3px;font-weight:700;color:#256425;transform:scaleX(0.9513);">Balances Due</span>
<span class="t" style="left:241.50px;top:247.41px;font-size:6.3px;font-weight:700;color:#256425;transform:scaleX(0.9419);">Outstanding Works</span>
<span class="t" style="left:399.30px;top:223.66px;font-size:6px;color:#34343e;letter-spacing:0.019px;-webkit-text-stroke-width:0.18px;">£33,453.00</span>
<span class="t" style="left:401.10px;top:235.76px;font-size:6px;color:#34343e;-webkit-text-stroke-width:0.18px;">£9,783.40</span>
<span class="t" style="left:399.30px;top:247.56px;font-size:6px;color:#34343e;letter-spacing:0.019px;-webkit-text-stroke-width:0.18px;">£19,083.48</span>
<span class="t" style="left:399.00px;top:259.46px;font-size:6px;font-weight:700;color:#34343e;letter-spacing:0.085px;">£62,319.88</span>
<span class="t" style="left:495.83px;top:223.66px;font-size:6px;color:#34343e;-webkit-text-stroke-width:0.18px;">6</span>
<span class="t" style="left:495.83px;top:235.76px;font-size:6px;color:#34343e;-webkit-text-stroke-width:0.18px;">9</span>
<span class="t" style="left:494.16px;top:247.56px;font-size:6px;color:#34343e;-webkit-text-stroke-width:0.18px;">15</span>
<span class="t" style="left:494.16px;top:259.46px;font-size:6px;font-weight:700;color:#34343e;">30</span>
<span class="t" style="left:167.00px;top:344.01px;font-size:6.5px;font-weight:700;transform:scaleX(0.8891);">Job No.</span>
<span class="t" style="left:232.50px;top:344.01px;font-size:6.5px;font-weight:700;transform:scaleX(0.9083);">Survey received</span>
<span class="t" style="left:341.30px;top:344.01px;font-size:6.5px;font-weight:700;transform:scaleX(0.9514);">Install Date</span>
<span class="t" style="left:427.80px;top:344.01px;font-size:6.5px;font-weight:700;transform:scaleX(0.9214);">Install Days</span>
<span class="t" style="left:476.20px;top:328.62px;font-size:6.5px;font-weight:700;transform:scaleX(0.9437);-webkit-text-stroke-width:0.15px;">(1 - 5 of 905)</span>
<span class="t" style="left:167.00px;top:359.51px;font-size:6.5px;color:#505560;transform:scaleX(0.9570);">37622</span>
<span class="t" style="left:232.50px;top:359.51px;font-size:6.5px;color:#505560;transform:scaleX(0.9586);">23/02/2023</span>
<span class="t" style="left:341.30px;top:359.51px;font-size:6.5px;color:#505560;transform:scaleX(0.9887);">11/04/2023</span>
<span class="t" style="left:427.80px;top:359.51px;font-size:6.5px;color:#505560;">11</span>
<span class="t" style="left:167.00px;top:374.62px;font-size:6.5px;color:#505560;transform:scaleX(0.9833);">41140</span>
<span class="t" style="left:232.50px;top:374.62px;font-size:6.5px;color:#505560;transform:scaleX(0.9586);">18/08/2023</span>
<span class="t" style="left:341.30px;top:374.62px;font-size:6.5px;color:#505560;transform:scaleX(0.9740);">30/10/2023</span>
<span class="t" style="left:427.80px;top:374.62px;font-size:6.5px;color:#505560;">6</span>
<span class="t" style="left:167.00px;top:389.71px;font-size:6.5px;color:#505560;transform:scaleX(0.9570);">37192</span>
<span class="t" style="left:232.50px;top:389.71px;font-size:6.5px;color:#505560;transform:scaleX(0.9586);">03/02/2023</span>
<span class="t" style="left:341.30px;top:389.71px;font-size:6.5px;color:#505560;transform:scaleX(0.9740);">17/04/2023</span>
<span class="t" style="left:427.80px;top:389.71px;font-size:6.5px;color:#505560;">6</span>
<span class="t" style="left:167.00px;top:404.81px;font-size:6.5px;color:#505560;transform:scaleX(0.9570);">38752</span>
<span class="t" style="left:232.50px;top:404.81px;font-size:6.5px;color:#505560;transform:scaleX(0.9586);">06/04/2023</span>
<span class="t" style="left:341.30px;top:404.81px;font-size:6.5px;color:#505560;transform:scaleX(0.9740);">05/06/2023</span>
<span class="t" style="left:427.80px;top:404.81px;font-size:6.5px;color:#505560;">6</span>
<span class="t" style="left:167.00px;top:419.91px;font-size:6.5px;color:#505560;transform:scaleX(0.9833);">38911</span>
<span class="t" style="left:232.50px;top:419.91px;font-size:6.5px;color:#505560;transform:scaleX(0.9586);">25/04/2023</span>
<span class="t" style="left:341.30px;top:419.91px;font-size:6.5px;color:#505560;transform:scaleX(0.9740);">25/07/2023</span>
<span class="t" style="left:427.80px;top:419.91px;font-size:6.5px;color:#505560;">5</span>
<span class="t" style="left:553.00px;top:114.49px;font-size:9px;font-weight:700;transform:scaleX(0.9883);">Loughton</span>
<span class="t" style="left:803.70px;top:114.49px;font-size:9px;font-weight:700;transform:scaleX(0.9876);">Last 4 Weeks - £273,898.34</span>
<span class="t" style="left:623.35px;top:132.47px;font-size:7px;transform:scaleX(0.9729);-webkit-text-stroke:0.25px #fff;text-shadow:0.5px 0.5px 1px rgba(0,30,0,.75);">Week</span>
<span class="t" style="left:615.00px;top:140.57px;font-size:7px;transform:scaleX(0.9701);-webkit-text-stroke:0.25px #fff;text-shadow:0.5px 0.5px 1px rgba(0,30,0,.75);">18/09/2023</span>
<span class="t" style="left:682.15px;top:132.47px;font-size:7px;transform:scaleX(0.9729);-webkit-text-stroke:0.25px #fff;text-shadow:0.5px 0.5px 1px rgba(0,30,0,.75);">Week</span>
<span class="t" style="left:673.80px;top:140.57px;font-size:7px;transform:scaleX(0.9701);-webkit-text-stroke:0.25px #fff;text-shadow:0.5px 0.5px 1px rgba(0,30,0,.75);">25/09/2023</span>
<span class="t" style="left:751.15px;top:132.47px;font-size:7px;transform:scaleX(0.9729);-webkit-text-stroke:0.25px #fff;text-shadow:0.5px 0.5px 1px rgba(0,30,0,.75);">Week</span>
<span class="t" style="left:742.80px;top:140.57px;font-size:7px;transform:scaleX(0.9701);-webkit-text-stroke:0.25px #fff;text-shadow:0.5px 0.5px 1px rgba(0,30,0,.75);">02/10/2023</span>
<span class="t" style="left:850.55px;top:132.47px;font-size:7px;transform:scaleX(0.9729);-webkit-text-stroke:0.25px #fff;text-shadow:0.5px 0.5px 1px rgba(0,30,0,.75);">Week</span>
<span class="t" style="left:842.20px;top:140.57px;font-size:7px;transform:scaleX(0.9701);-webkit-text-stroke:0.25px #fff;text-shadow:0.5px 0.5px 1px rgba(0,30,0,.75);">09/10/2023</span>
<span class="t" style="left:558.03px;top:152.47px;font-size:7px;color:#27503a;-webkit-text-stroke-width:0.1px;">Gary Lytton</span>
<span class="t" style="left:614.75px;top:152.52px;font-size:6.9px;font-weight:700;color:#1f5c22;">£28,767.50</span>
<span class="t" style="left:671.64px;top:152.52px;font-size:6.9px;font-weight:700;color:#1f5c22;">£151,143.34</span>
<span class="t" style="left:742.55px;top:152.52px;font-size:6.9px;font-weight:700;color:#1f5c22;">£18,408.33</span>
<span class="t" style="left:841.95px;top:152.52px;font-size:6.9px;font-weight:700;color:#1f5c22;">£47,486.67</span>
<span class="t" style="left:557.38px;top:164.47px;font-size:7px;color:#27503a;-webkit-text-stroke-width:0.1px;">Jeff Bennett</span>
<span class="t" style="left:616.67px;top:164.52px;font-size:6.9px;font-weight:700;color:#1f5c22;">£1,578.33</span>
<span class="t" style="left:675.47px;top:164.52px;font-size:6.9px;font-weight:700;color:#1f5c22;">£2,656.67</span>
<span class="t" style="left:744.47px;top:164.52px;font-size:6.9px;font-weight:700;color:#1f5c22;">£4,450.00</span>
<span class="t" style="left:841.95px;top:164.52px;font-size:6.9px;font-weight:700;color:#1f5c22;">£19,407.50</span>
<span class="t" style="left:553.00px;top:182.49px;font-size:9px;font-weight:700;transform:scaleX(0.9867);">Romford</span>
<span class="t" style="left:808.70px;top:182.49px;font-size:9px;font-weight:700;transform:scaleX(0.9871);">Last 4 Weeks - £69,079.17</span>
<span class="t" style="left:624.95px;top:200.47px;font-size:7px;transform:scaleX(0.9729);-webkit-text-stroke:0.25px #fff;text-shadow:0.5px 0.5px 1px rgba(0,30,0,.75);">Week</span>
<span class="t" style="left:616.60px;top:208.57px;font-size:7px;transform:scaleX(0.9701);-webkit-text-stroke:0.25px #fff;text-shadow:0.5px 0.5px 1px rgba(0,30,0,.75);">18/09/2023</span>
<span class="t" style="left:684.65px;top:200.47px;font-size:7px;transform:scaleX(0.9729);-webkit-text-stroke:0.25px #fff;text-shadow:0.5px 0.5px 1px rgba(0,30,0,.75);">Week</span>
<span class="t" style="left:676.30px;top:208.57px;font-size:7px;transform:scaleX(0.9701);-webkit-text-stroke:0.25px #fff;text-shadow:0.5px 0.5px 1px rgba(0,30,0,.75);">25/09/2023</span>
<span class="t" style="left:756.35px;top:200.47px;font-size:7px;transform:scaleX(0.9729);-webkit-text-stroke:0.25px #fff;text-shadow:0.5px 0.5px 1px rgba(0,30,0,.75);">Week</span>
<span class="t" style="left:748.00px;top:208.57px;font-size:7px;transform:scaleX(0.9701);-webkit-text-stroke:0.25px #fff;text-shadow:0.5px 0.5px 1px rgba(0,30,0,.75);">02/10/2023</span>
<span class="t" style="left:853.05px;top:200.47px;font-size:7px;transform:scaleX(0.9729);-webkit-text-stroke:0.25px #fff;text-shadow:0.5px 0.5px 1px rgba(0,30,0,.75);">Week</span>
<span class="t" style="left:844.70px;top:208.57px;font-size:7px;transform:scaleX(0.9701);-webkit-text-stroke:0.25px #fff;text-shadow:0.5px 0.5px 1px rgba(0,30,0,.75);">09/10/2023</span>
<span class="t" style="left:556.19px;top:220.47px;font-size:7px;color:#27503a;-webkit-text-stroke-width:0.1px;">James Styles</span>
<span class="t" style="left:618.27px;top:220.52px;font-size:6.9px;font-weight:700;color:#1f5c22;">£2,666.67</span>
<span class="t" style="left:677.97px;top:220.52px;font-size:6.9px;font-weight:700;color:#1f5c22;">£7,741.67</span>
<span class="t" style="left:756.38px;top:220.52px;font-size:6.9px;font-weight:700;color:#1f5c22;">£0.00</span>
<span class="t" style="left:844.45px;top:220.52px;font-size:6.9px;font-weight:700;color:#1f5c22;">£21,149.99</span>
<span class="t" style="left:560.85px;top:232.47px;font-size:7px;color:#27503a;-webkit-text-stroke-width:0.1px;">Les Styles</span>
<span class="t" style="left:616.35px;top:232.52px;font-size:6.9px;font-weight:700;color:#1f5c22;">£12,708.34</span>
<span class="t" style="left:677.97px;top:232.52px;font-size:6.9px;font-weight:700;color:#1f5c22;">£9,166.67</span>
<span class="t" style="left:756.38px;top:232.52px;font-size:6.9px;font-weight:700;color:#1f5c22;">£0.00</span>
<span class="t" style="left:844.45px;top:232.52px;font-size:6.9px;font-weight:700;color:#1f5c22;">£15,645.83</span>
<span class="t" style="left:553.00px;top:250.49px;font-size:9px;font-weight:700;transform:scaleX(0.9888);">6DayDoors</span>
<span class="t" style="left:813.20px;top:250.49px;font-size:9px;font-weight:700;transform:scaleX(0.9914);">Last 4 Weeks - £2,550.00</span>
<span class="t" style="left:627.65px;top:268.47px;font-size:7px;transform:scaleX(0.9729);-webkit-text-stroke:0.25px #fff;text-shadow:0.5px 0.5px 1px rgba(0,30,0,.75);">Week</span>
<span class="t" style="left:619.30px;top:276.57px;font-size:7px;transform:scaleX(0.9701);-webkit-text-stroke:0.25px #fff;text-shadow:0.5px 0.5px 1px rgba(0,30,0,.75);">18/09/2023</span>
<span class="t" style="left:687.15px;top:268.47px;font-size:7px;transform:scaleX(0.9729);-webkit-text-stroke:0.25px #fff;text-shadow:0.5px 0.5px 1px rgba(0,30,0,.75);">Week</span>
<span class="t" style="left:678.80px;top:276.57px;font-size:7px;transform:scaleX(0.9701);-webkit-text-stroke:0.25px #fff;text-shadow:0.5px 0.5px 1px rgba(0,30,0,.75);">25/09/2023</span>
<span class="t" style="left:761.35px;top:268.47px;font-size:7px;transform:scaleX(0.9729);-webkit-text-stroke:0.25px #fff;text-shadow:0.5px 0.5px 1px rgba(0,30,0,.75);">Week</span>
<span class="t" style="left:753.00px;top:276.57px;font-size:7px;transform:scaleX(0.9701);-webkit-text-stroke:0.25px #fff;text-shadow:0.5px 0.5px 1px rgba(0,30,0,.75);">02/10/2023</span>
<span class="t" style="left:855.75px;top:268.47px;font-size:7px;transform:scaleX(0.9729);-webkit-text-stroke:0.25px #fff;text-shadow:0.5px 0.5px 1px rgba(0,30,0,.75);">Week</span>
<span class="t" style="left:847.40px;top:276.57px;font-size:7px;transform:scaleX(0.9701);-webkit-text-stroke:0.25px #fff;text-shadow:0.5px 0.5px 1px rgba(0,30,0,.75);">09/10/2023</span>
<span class="t" style="left:553.73px;top:288.47px;font-size:7px;color:#27503a;-webkit-text-stroke-width:0.1px;">Georgia Lambert</span>
<span class="t" style="left:620.97px;top:288.52px;font-size:6.9px;font-weight:700;color:#1f5c22;">£2,550.00</span>
<span class="t" style="left:687.17px;top:288.52px;font-size:6.9px;font-weight:700;color:#1f5c22;">£0.00</span>
<span class="t" style="left:761.38px;top:288.52px;font-size:6.9px;font-weight:700;color:#1f5c22;">£0.00</span>
<span class="t" style="left:855.77px;top:288.52px;font-size:6.9px;font-weight:700;color:#1f5c22;">£0.00</span>
<span class="t" style="left:553.00px;top:306.49px;font-size:9px;font-weight:700;transform:scaleX(0.9894);">Brentwood</span>
<span class="t" style="left:808.70px;top:306.49px;font-size:9px;font-weight:700;transform:scaleX(0.9871);">Last 4 Weeks - £62,541.68</span>
<span class="t" style="left:625.15px;top:324.47px;font-size:7px;transform:scaleX(0.9729);-webkit-text-stroke:0.25px #fff;text-shadow:0.5px 0.5px 1px rgba(0,30,0,.75);">Week</span>
<span class="t" style="left:616.80px;top:332.57px;font-size:7px;transform:scaleX(0.9701);-webkit-text-stroke:0.25px #fff;text-shadow:0.5px 0.5px 1px rgba(0,30,0,.75);">18/09/2023</span>
<span class="t" style="left:684.65px;top:324.47px;font-size:7px;transform:scaleX(0.9729);-webkit-text-stroke:0.25px #fff;text-shadow:0.5px 0.5px 1px rgba(0,30,0,.75);">Week</span>
<span class="t" style="left:676.30px;top:332.57px;font-size:7px;transform:scaleX(0.9701);-webkit-text-stroke:0.25px #fff;text-shadow:0.5px 0.5px 1px rgba(0,30,0,.75);">25/09/2023</span>
<span class="t" style="left:756.35px;top:324.47px;font-size:7px;transform:scaleX(0.9729);-webkit-text-stroke:0.25px #fff;text-shadow:0.5px 0.5px 1px rgba(0,30,0,.75);">Week</span>
<span class="t" style="left:748.00px;top:332.57px;font-size:7px;transform:scaleX(0.9701);-webkit-text-stroke:0.25px #fff;text-shadow:0.5px 0.5px 1px rgba(0,30,0,.75);">02/10/2023</span>
<span class="t" style="left:853.05px;top:324.47px;font-size:7px;transform:scaleX(0.9729);-webkit-text-stroke:0.25px #fff;text-shadow:0.5px 0.5px 1px rgba(0,30,0,.75);">Week</span>
<span class="t" style="left:844.70px;top:332.57px;font-size:7px;transform:scaleX(0.9701);-webkit-text-stroke:0.25px #fff;text-shadow:0.5px 0.5px 1px rgba(0,30,0,.75);">09/10/2023</span>
<span class="t" style="left:556.10px;top:344.47px;font-size:7px;color:#27503a;-webkit-text-stroke-width:0.1px;">Louis Doherty</span>
<span class="t" style="left:616.55px;top:344.52px;font-size:6.9px;font-weight:700;color:#1f5c22;">£19,166.67</span>
<span class="t" style="left:684.67px;top:344.52px;font-size:6.9px;font-weight:700;color:#1f5c22;">£0.00</span>
<span class="t" style="left:747.75px;top:344.52px;font-size:6.9px;font-weight:700;color:#1f5c22;">£13,500.01</span>
<span class="t" style="left:844.45px;top:344.52px;font-size:6.9px;font-weight:700;color:#1f5c22;">£19,625.00</span>
<span class="t" style="left:558.04px;top:356.47px;font-size:7px;color:#27503a;-webkit-text-stroke-width:0.1px;">Jody Pardoe</span>
<span class="t" style="left:625.17px;top:356.52px;font-size:6.9px;font-weight:700;color:#1f5c22;">£0.00</span>
<span class="t" style="left:684.67px;top:356.52px;font-size:6.9px;font-weight:700;color:#1f5c22;">£0.00</span>
<span class="t" style="left:749.67px;top:356.52px;font-size:6.9px;font-weight:700;color:#1f5c22;">£5,500.00</span>
<span class="t" style="left:846.37px;top:356.52px;font-size:6.9px;font-weight:700;color:#1f5c22;">£4,750.00</span>
<span class="t" style="left:895.80px;top:470.12px;font-size:6.5px;color:#4a4a4a;transform:scaleX(0.9738);-webkit-text-stroke:0.2px #4a4a4a;">BACK TO TOP</span>
<span class="t" style="left:28.90px;top:530.34px;font-size:8.5px;font-weight:700;transform:scaleX(0.9462);">0:03</span>
</div>
</body>
</html>
